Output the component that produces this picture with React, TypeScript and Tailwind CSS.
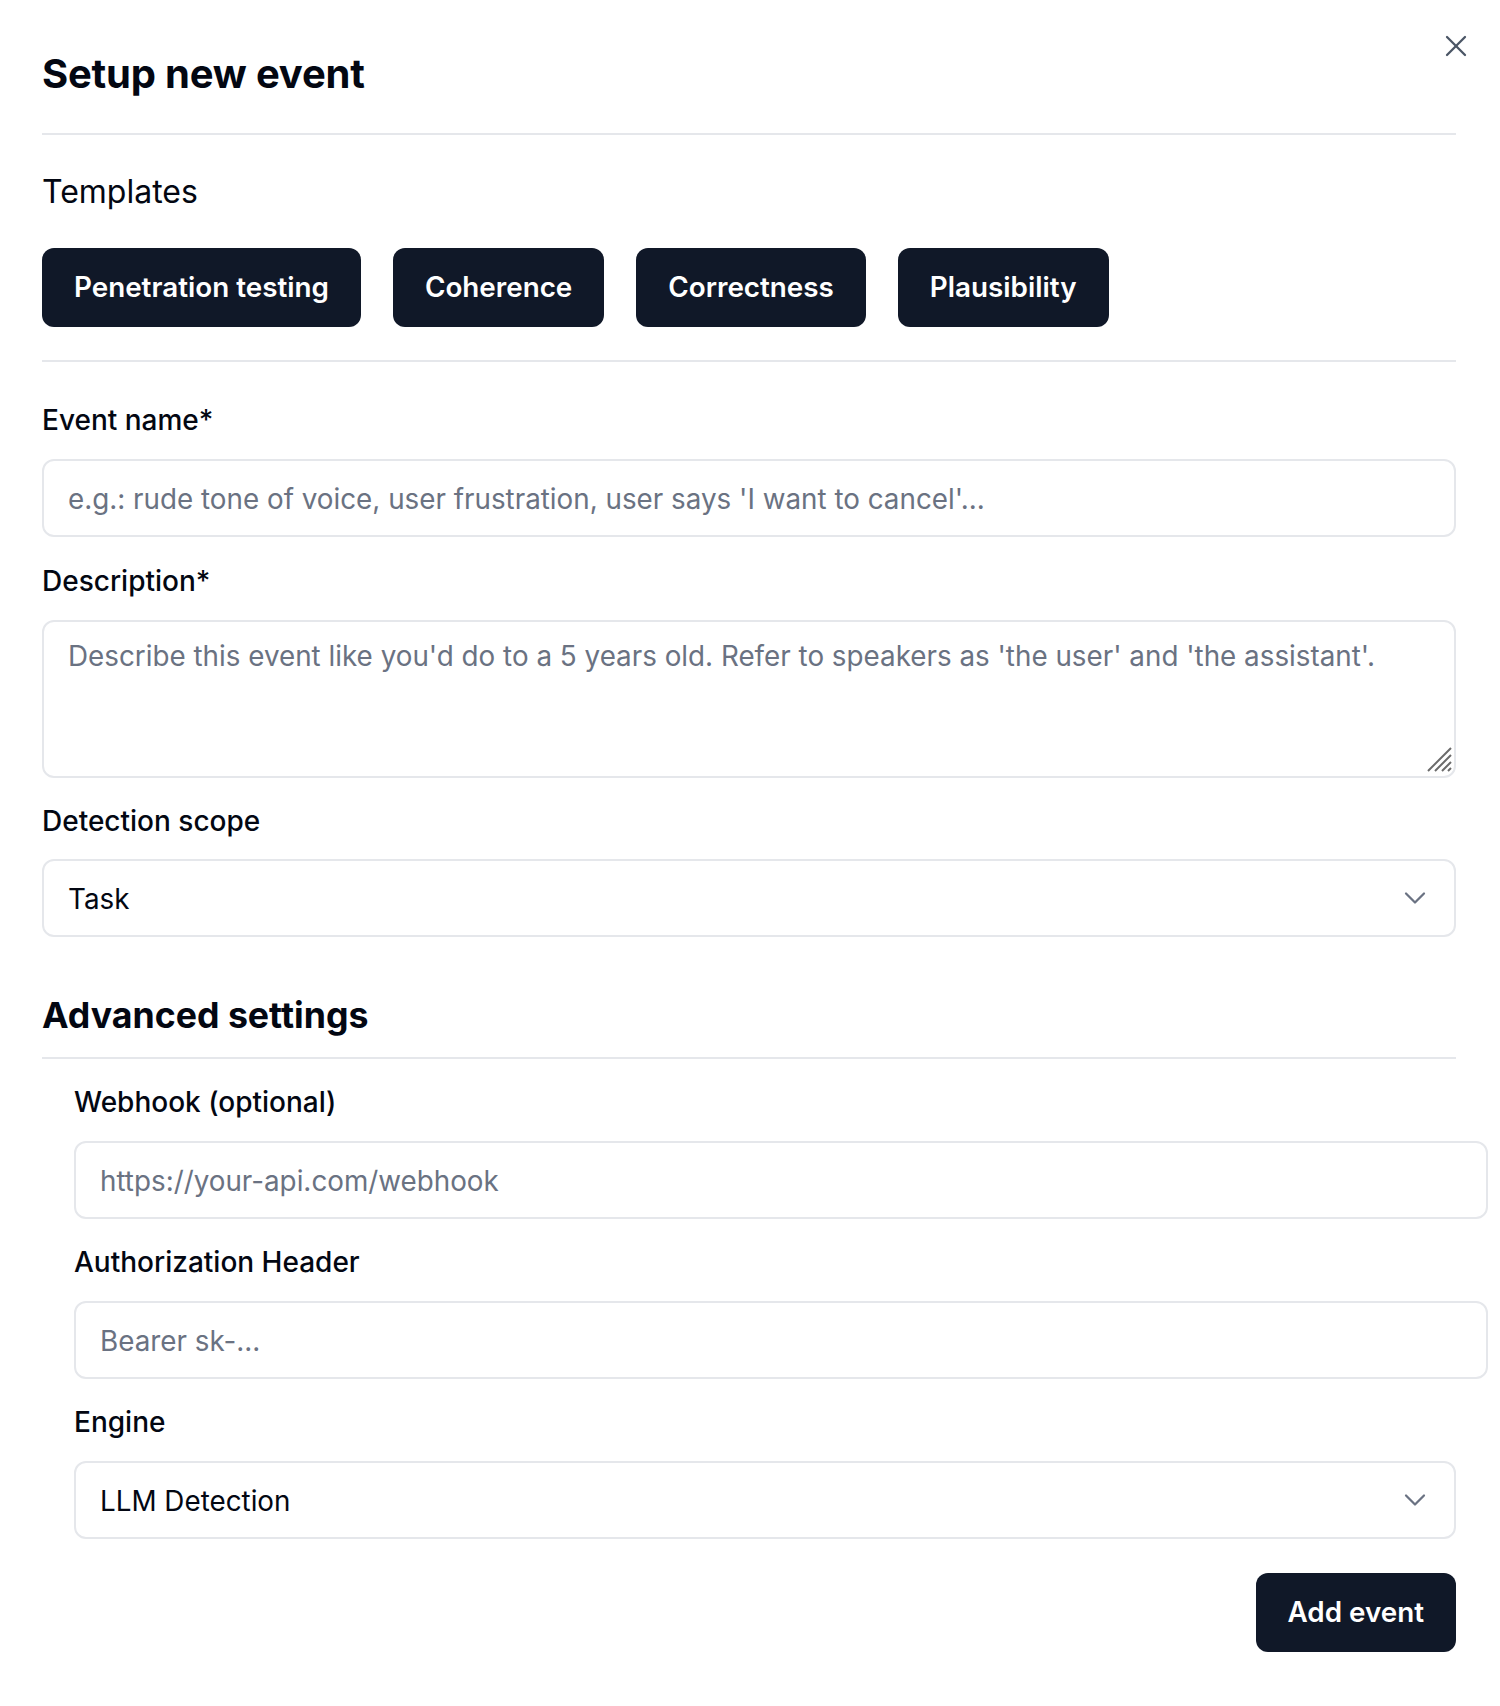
import { ChevronDown, X } from "lucide-react";

const templates = ["Penetration testing", "Coherence", "Correctness", "Plausibility"];

const font = { fontFamily: "Inter, 'Noto Sans', sans-serif" };

function Label({ children, className = "" }: { children: React.ReactNode; className?: string }) {
  return <label className={`block text-[28px] leading-[32px] font-medium text-gray-950 ${className}`}>{children}</label>;
}

function TextInput({ placeholder, className = "" }: { placeholder: string; className?: string }) {
  return (
    <input
      type="text"
      placeholder={placeholder}
      className={`block h-[78px] rounded-[12px] border-2 border-gray-200 bg-white px-[24px] pt-[2px] text-[27.8px] text-gray-950 outline-none placeholder:text-gray-500 ${className}`}
    />
  );
}

function SelectBox({ value, className = "" }: { value: string; className?: string }) {
  return (
    <button
      type="button"
      className={`flex h-[78px] items-center justify-between rounded-[12px] border-2 border-gray-200 bg-white pl-[24px] pr-[21px] text-left text-[27.8px] text-gray-950 ${className}`}
    >
      <span className="pt-[3px]">{value}</span>
      <ChevronDown size={36} strokeWidth={1.5} className="text-gray-500" />
    </button>
  );
}

export default function App() {
  return (
    <div className="relative min-h-[1706px] w-full bg-white pb-[55px] pl-[42px] pr-[44px] pt-[50px]" style={font}>
      <button type="button" className="absolute right-[26px] top-[28px] text-gray-600">
        <X size={36} strokeWidth={1.5} />
      </button>

      <h1 className="text-[40px] font-bold leading-[48px] tracking-[-0.2px] text-gray-950">Setup new event</h1>
      <div className="mt-[35px] h-[2px] bg-gray-200" />

      <h2 className="mt-[37px] text-[32px] leading-[40px] text-gray-950">Templates</h2>
      <div className="mt-[36px] flex gap-[32px]">
        {templates.map((t) => (
          <button
            key={t}
            type="button"
            className="h-[79px] rounded-[12px] bg-gray-900 px-[32px] text-[27.8px] font-semibold text-white"
          >
            {t}
          </button>
        ))}
      </div>
      <div className="mt-[33px] h-[2px] bg-gray-200" />

      <Label className="mt-[42px]">Event name*</Label>
      <TextInput
        className="mt-[23px] w-full"
        placeholder="e.g.: rude tone of voice, user frustration, user says 'I want to cancel'..."
      />

      <Label className="mt-[28px]">Description*</Label>
      <div className="relative mt-[23px]">
        <textarea
          className="block h-[158px] w-full resize-none rounded-[12px] border-2 border-gray-200 px-[24px] py-[15px] text-[27.8px] leading-[38px] text-gray-950 outline-none placeholder:text-gray-500"
          placeholder="Describe this event like you'd do to a 5 years old. Refer to speakers as 'the user' and 'the assistant'."
        />
        <svg className="absolute bottom-[6px] right-[4px]" width="26" height="26" viewBox="0 0 26 26" fill="none">
          <path d="M2 25 25 2M9 25 25 9M16 25 25 16M22 25 25 22" stroke="#6b6b6b" strokeWidth="2" />
        </svg>
      </div>

      <Label className="mt-[27px]">Detection scope</Label>
      <SelectBox value="Task" className="mt-[22px] w-full" />

      <h2 className="mt-[58px] text-[35.7px] font-bold leading-[40px] text-gray-950">Advanced settings</h2>
      <div className="mt-[22px] h-[2px] bg-gray-200" />

      <div className="ml-[32px]">
        <Label className="mt-[27px]">Webhook (optional)</Label>
        <TextInput className="mt-[23px] w-[1414px]" placeholder="https://your-api.com/webhook" />

        <Label className="mt-[27px]">Authorization Header</Label>
        <TextInput className="mt-[23px] w-[1414px]" placeholder="Bearer sk-..." />

        <Label className="mt-[27px]">Engine</Label>
        <SelectBox value="LLM Detection" className="mt-[23px] w-full" />
      </div>

      <div className="mt-[34px] flex justify-end">
        <button type="button" className="h-[79px] rounded-[12px] bg-gray-900 px-[32px] text-[27.8px] font-semibold text-white">
          Add event
        </button>
      </div>
    </div>
  );
}
